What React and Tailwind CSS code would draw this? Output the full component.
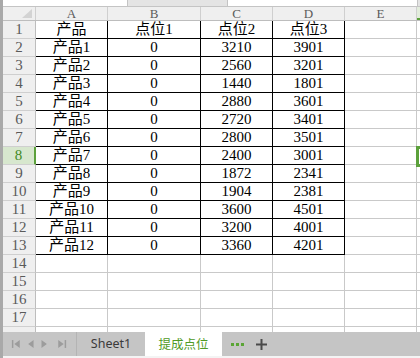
import React from "react";

const data = [
  ["产品", "点位1", "点位2", "点位3"],
  ["产品1", "0", "3210", "3901"],
  ["产品2", "0", "2560", "3201"],
  ["产品3", "0", "1440", "1801"],
  ["产品4", "0", "2880", "3601"],
  ["产品5", "0", "2720", "3401"],
  ["产品6", "0", "2800", "3501"],
  ["产品7", "0", "2400", "3001"],
  ["产品8", "0", "1872", "2341"],
  ["产品9", "0", "1904", "2381"],
  ["产品10", "0", "3600", "4501"],
  ["产品11", "0", "3200", "4001"],
  ["产品12", "0", "3360", "4201"],
];

const widths = ["w-[72px]", "w-[93px]", "w-[72px]", "w-[72px]"];
const letters = ["A", "B", "C", "D"];
const cellFont = { fontFamily: '"Liberation Serif", "Noto Sans CJK SC", serif' };

function Row({ n, cells, label }) {
  const sel = n === 8;
  return (
    <div className="flex h-[18px] shrink-0">
      <div
        className={
          sel
            ? "w-[33px] shrink-0 bg-[#d7e7ce] border-r-2 border-r-[#5ca13b] border-b border-b-[#cfcfcf] text-[#3f8a1f] flex items-center justify-center text-[15px] leading-none"
            : "w-[33px] shrink-0 bg-[#efefef] border-r border-r-[#bdbdbd] border-b border-b-[#cfcfcf] text-[#5a5a5a] flex items-center justify-center text-[15px] leading-none"
        }
        style={cellFont}
      >
        {label ? n : null}
      </div>
      {[0, 1, 2, 3].map((i) =>
        cells ? (
          <div
            key={i}
            className={`${widths[i]} shrink-0 border-r border-b border-black flex items-center justify-center text-[15px] leading-none text-black`}
            style={cellFont}
          >
            {cells[i]}
          </div>
        ) : (
          <div
            key={i}
            className={`${widths[i]} shrink-0 border-r border-b border-[#c9c9c9]`}
          />
        )
      )}
      <div className="w-[72px] shrink-0 border-r border-b border-[#c9c9c9]" />
      <div className="flex-1 border-b border-[#c9c9c9]" />
    </div>
  );
}

export default function App() {
  const rows = [];
  for (let n = 1; n <= 18; n++) {
    rows.push(<Row key={n} n={n} cells={data[n - 1]} label={n <= 17} />);
  }
  return (
    <div className="w-[420px] h-[358px] overflow-hidden bg-white flex relative">
      <div className="w-[3px] shrink-0 bg-[#a9a9a9]" />
      <div className="flex-1 flex flex-col min-w-0">
        {/* formula bar remnant */}
        <div className="h-[7px] shrink-0 bg-[#e4e4e4] flex border-b border-[#c4c4c4]">
          <div className="w-[125px] shrink-0 bg-white border-r border-[#c4c4c4]" />
          <div className="w-[99px] shrink-0" />
          <div className="w-[191px] shrink-0 bg-white border-x border-[#c4c4c4]" />
        </div>
        {/* column header */}
        <div className="h-[14px] shrink-0 flex bg-[#efefef] border-b border-[#bdbdbd]">
          <div className="w-[33px] shrink-0 border-r border-[#cfcfcf] relative">
            <svg width="10" height="9" viewBox="0 0 10 9" className="absolute right-[3px] bottom-[2px]">
              <polygon points="10,0 10,9 0,9" fill="#d3d3d3" />
            </svg>
          </div>
          {letters.map((l, i) => (
            <div
              key={l}
              className={`${widths[i]} shrink-0 border-r border-[#cfcfcf] flex items-center justify-center text-[13px] leading-none text-[#5a5a5a]`}
              style={cellFont}
            >
              {l}
            </div>
          ))}
          <div
            className="w-[72px] shrink-0 border-r border-[#cfcfcf] flex items-center justify-center text-[13px] leading-none text-[#5a5a5a]"
            style={cellFont}
          >
            E
          </div>
          <div className="flex-1 bg-[#e2ecdc] border-b-2 border-[#5ca13b]" />
        </div>
        {/* grid */}
        <div className="flex-1 overflow-hidden flex flex-col">{rows}</div>
        {/* tab bar */}
        <div className="h-[24px] shrink-0 bg-[#c5c5c5] flex items-stretch">
          <div className="w-[74px] shrink-0 flex items-center border-r border-[#b4b4b4]">
            <svg width="74" height="24" viewBox="0 0 74 24">
              <rect x="9" y="8" width="1.5" height="8" fill="#9c9c9c" />
              <polygon points="17,8 17,16 11.5,12" fill="#9c9c9c" />
              <polygon points="31,8 31,16 25.5,12" fill="#9c9c9c" />
              <polygon points="39,8 39,16 44.5,12" fill="#9c9c9c" />
              <polygon points="56,8 56,16 61.5,12" fill="#9c9c9c" />
              <rect x="62.5" y="8" width="1.5" height="8" fill="#9c9c9c" />
            </svg>
          </div>
          <div
            className="w-[68px] shrink-0 flex items-center justify-center text-[12.5px] text-[#3a3a3a]"
            style={{ fontFamily: '"Noto Sans", "Noto Sans CJK SC", sans-serif' }}
          >
            Sheet1
          </div>
          <div
            className="w-[77px] shrink-0 bg-white flex items-center justify-center text-[12.5px] text-[#4f9a25]"
            style={{ fontFamily: '"Noto Sans CJK SC", sans-serif' }}
          >
            提成点位
          </div>
          <div className="flex items-center pl-[9px] gap-[2px]">
            <div className="w-[3px] h-[3px] bg-[#5aa535]" />
            <div className="w-[3px] h-[3px] bg-[#5aa535]" />
            <div className="w-[3px] h-[3px] bg-[#5aa535]" />
          </div>
          <div className="flex items-center pl-[12px]">
            <svg width="11" height="11" viewBox="0 0 11 11">
              <rect x="0" y="4.5" width="11" height="2" fill="#4a4a4a" />
              <rect x="4.5" y="0" width="2" height="11" fill="#4a4a4a" />
            </svg>
          </div>
        </div>
        <div className="h-[2px] shrink-0 bg-[#f4f4f4]" />
      </div>
      {/* selected cell F8 */}
      <div className="absolute left-[416px] top-[146px] w-[8px] h-[21px] border-[3px] border-[#5ca13b]" />
    </div>
  );
}
